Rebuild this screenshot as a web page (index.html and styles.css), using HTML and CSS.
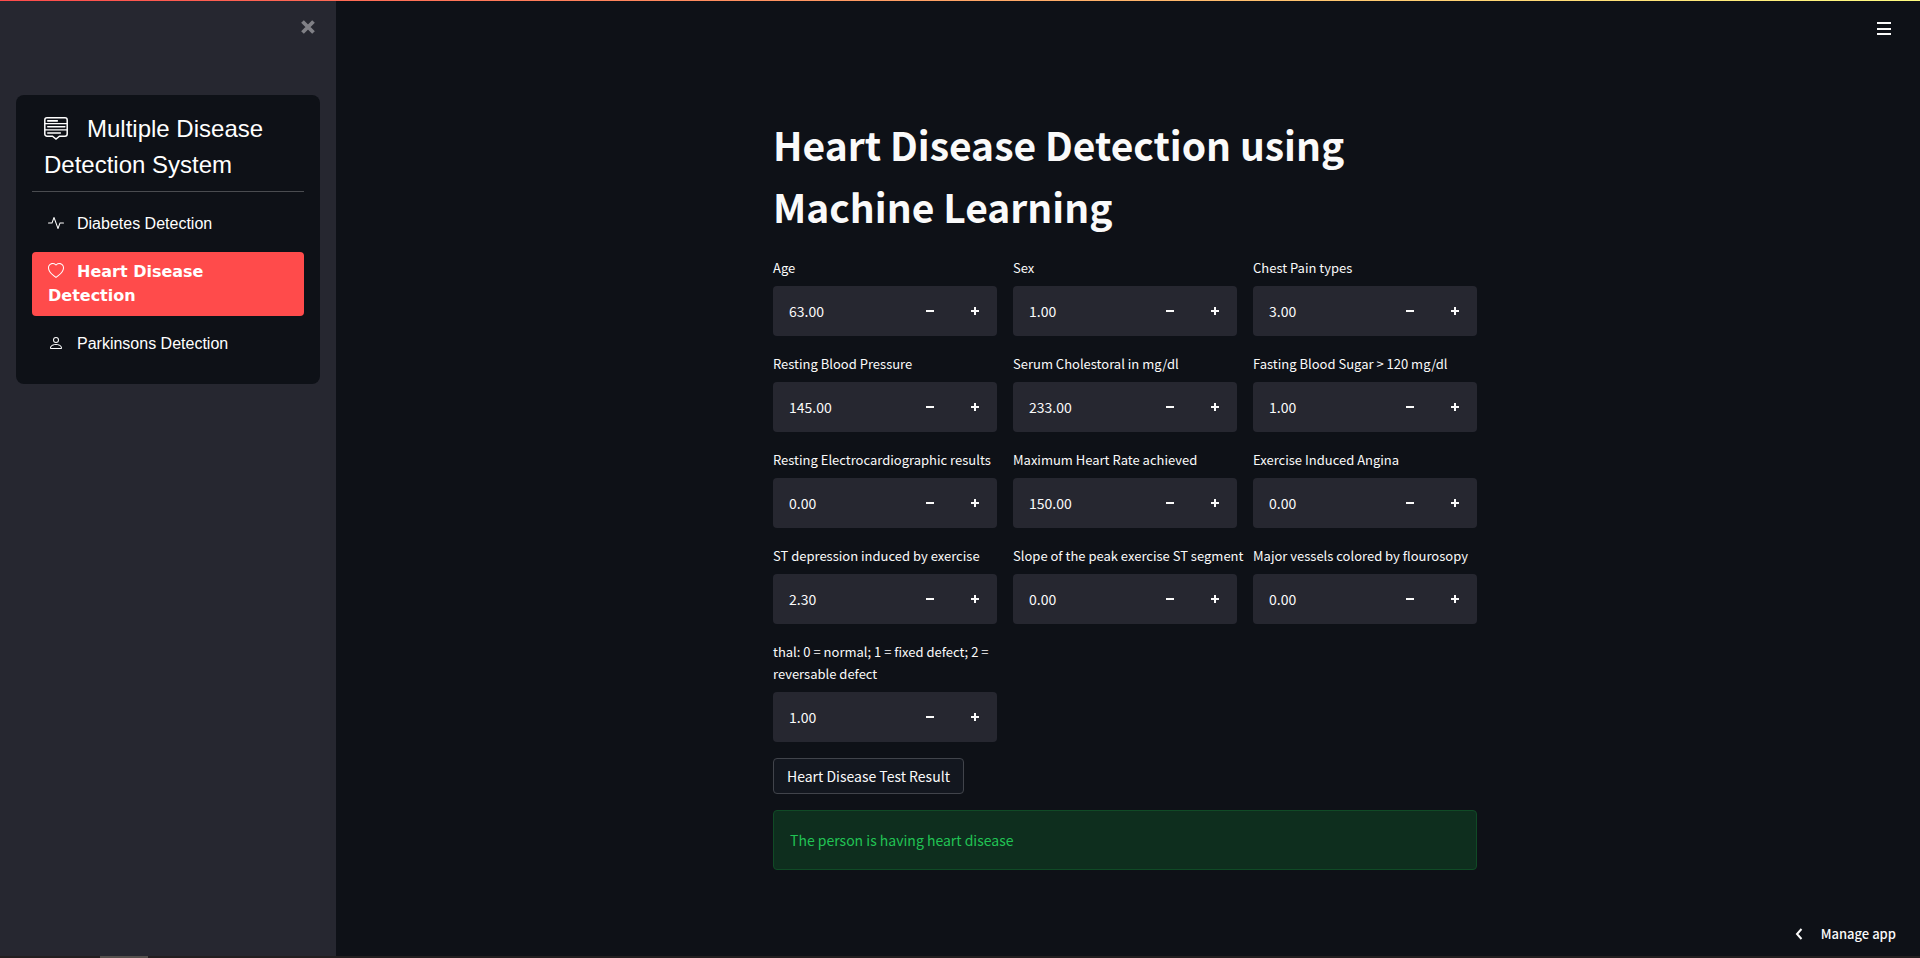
FILE: index.html
```html
<!DOCTYPE html>
<html lang="en">
<head>
<meta charset="utf-8">
<title>Multiple Disease Detection System</title>
<link rel="stylesheet" href="styles.css">
</head>
<body>
<div class="app">
  <div class="decoration"></div>
  <aside class="sidebar">
    <div class="sidebar-top">
      <button class="close" type="button" aria-label="Close sidebar">
        <svg viewBox="0 0 14 14" width="14" height="14" fill="none" stroke="currentColor" stroke-width="3.800"><path d="M1.500 1.500l11 11M12.500 1.500l-11 11"/></svg>
      </button>
    </div>
    <nav class="menu">
      <h2 class="menu-title"><svg class="title-icon" viewBox="0 0 24 24" width="24" height="24" fill="none" stroke="currentColor"><path stroke-width="1.500" d="M3 .8h18a2.200 2.200 0 0 1 2.200 2.200v14a2.200 2.200 0 0 1-2.200 2.200h-5.500L12 22l-3.500-2.800H3A2.200 2.200 0 0 1 .8 17V3A2.200 2.200 0 0 1 3 .8z"/><path stroke-width="1.200" d="M1 6.600h22M1 12.900h22"/><path stroke-width="1.600" stroke-linecap="round" d="M3.800 3.900h9.500M3.800 9.800h17M3.800 16h12.500"/></svg>Multiple Disease Detection System</h2>
      <hr class="rule">
      <ul class="items">
        <li><a class="item" href="#diabetes"><svg class="icon" viewBox="0 0 16 16" width="16" height="16" fill="currentColor"><path fill-rule="evenodd" d="M6 2a.5.5 0 0 1 .47.33L10 12.040l1.530-4.210A.5.5 0 0 1 12 7.500h3.500a.5.5 0 0 1 0 1h-3.150l-1.880 5.170a.5.5 0 0 1-.94 0L6 3.960 4.470 8.170A.5.5 0 0 1 4 8.500H.5a.5.5 0 0 1 0-1h3.150l1.880-5.170A.5.5 0 0 1 6 2"/></svg>Diabetes Detection</a></li>
        <li><a class="item active" href="#heart" aria-current="page"><svg class="icon" viewBox="0 0 16 16" width="16" height="16" fill="currentColor"><path d="m8 2.748-.717-.737C5.600.281 2.514.878 1.400 3.053c-.523 1.023-.641 2.500.314 4.385.92 1.815 2.834 3.989 6.286 6.357 3.452-2.368 5.365-4.542 6.286-6.357.955-1.886.838-3.362.314-4.385C13.486.878 10.400.28 8.717 2.010zM8 15C-7.333 4.868 3.279-3.040 7.824 1.143q.09.083.176.171a3 3 0 0 1 .176-.17C12.720-3.042 23.333 4.867 8 15"/></svg>Heart Disease Detection</a></li>
        <li><a class="item" href="#parkinsons"><svg class="icon" viewBox="0 0 16 16" width="16" height="16" fill="currentColor"><path d="M8 8a3 3 0 1 0 0-6 3 3 0 0 0 0 6m2-3a2 2 0 1 1-4 0 2 2 0 0 1 4 0m4 8c0 1-1 1-1 1H3s-1 0-1-1 1-4 6-4 6 3 6 4m-1-.004c-.001-.246-.154-.986-.832-1.664C11.516 10.680 10.289 10 8 10s-3.516.68-4.168 1.332c-.678.678-.83 1.418-.832 1.664z"/></svg>Parkinsons Detection</a></li>
      </ul>
    </nav>
  </aside>
  <main class="main">
    <header class="toolbar">
      <button class="hamburger" type="button" aria-label="Main menu">
        <svg viewBox="0 0 14 13" width="14" height="13" fill="currentColor"><path d="M0 0h14v2H0zM0 6h14v2H0zM0 11h14v2H0z"/></svg>
      </button>
    </header>
    <form class="content">
      <h1 class="title">Heart Disease Detection using Machine Learning</h1>
      <div class="fields" id="fields"></div>
      <button class="submit" type="button">Heart Disease Test Result</button>
      <div class="alert" role="status">The person is having heart disease</div>
    </form>
    <button class="manage" type="button">
      <svg viewBox="0 0 8 12" width="8" height="12" fill="none" stroke="currentColor" stroke-width="2"><path d="M6.500 1 2 6l4.500 5"/></svg>
      Manage app
    </button>
  </main>
  <div class="edge"><span class="edge-thumb"></span></div>
</div>
<script src="fields.js"></script>
</body>
</html>
```
FILE: styles.css
```css
* { box-sizing: border-box; }

body {
  margin: 0;
  background: #0e1117;
  color: #fafafa;
  font-family: "Source Sans Pro", "Noto Sans CJK SC", sans-serif;
  font-size: 14px;
}

button {
  border: 0;
  padding: 0;
  background: none;
  color: inherit;
  font: inherit;
  cursor: pointer;
}

svg { display: block; }

.app {
  display: grid;
  grid-template-columns: 336px 1fr;
  grid-template-rows: 1px 1fr 2px;
  min-height: 100vh;
}

.decoration {
  grid-column: 1 / -1;
  background: linear-gradient(90deg, #ff4b4b, #fffd80);
}

.sidebar {
  padding: 0 16px;
  background: #262730;
}

.sidebar-top {
  display: flex;
  justify-content: flex-end;
  height: 94px;
  padding: 19px 5px 0 0;
}

.close {
  align-self: flex-start;
  color: #808086;
}

.menu {
  padding: 16px;
  border-radius: 8px;
  background: #0e1117;
  color: #fff;
  font-family: "Liberation Sans", Arial, sans-serif;
}

.menu-title {
  margin: 0;
  padding: 0 12px;
  font-size: 24px;
  font-weight: 400;
  line-height: 36px;
}

.title-icon {
  display: inline-block;
  margin-right: 19px;
  vertical-align: -4px;
}

.rule {
  margin: 8px 0 12px;
  border: 0;
  border-top: 1px solid #4a4c50;
}

.items {
  display: grid;
  gap: 8px;
  margin: 0;
  padding: 0 0 4px;
  list-style: none;
}

.item {
  display: block;
  padding: 8px 16px;
  border-radius: 4px;
  color: #fff;
  font-size: 16px;
  line-height: 24px;
  text-decoration: none;
}

.icon {
  display: inline-block;
  margin-right: 13px;
  vertical-align: -2px;
}

.active {
  background: #ff4b4b;
  font-family: "Arial Black", "DejaVu Sans", sans-serif;
  font-weight: 900;
}

.main {
  display: flex;
  flex-direction: column;
  padding-right: 6px;
}

.toolbar {
  display: flex;
  justify-content: flex-end;
  padding: 21px 23px 0 0;
}

.content {
  width: 100%;
  max-width: 736px;
  margin: 0 auto;
  padding: 78px 16px 16px;
}

.title {
  margin: 0 0 20px;
  font-size: 39px;
  font-weight: 700;
  line-height: 62px;
}

.fields {
  display: grid;
  grid-template-columns: repeat(3, 1fr);
  gap: 17px 16px;
}

.field { min-width: 0; }

/* Long labels may run into the column gap before they wrap. */
.label {
  display: block;
  margin: 0 -12px 7px 0;
  font-size: 13px;
  line-height: 22px;
}

.stepper {
  display: flex;
  height: 50px;
  border-radius: 4px;
  background: #262730;
}

.value {
  flex: 1;
  min-width: 0;
  padding: 0 16px;
  border: 0;
  background: none;
  color: inherit;
  font: inherit;
}

.step {
  display: grid;
  place-items: center;
  width: 45px;
}

.submit {
  display: block;
  height: 36px;
  margin: 16px 0;
  padding: 0 13px;
  border: 1px solid #41444b;
  border-radius: 4px;
  background: #13171f;
}

.alert {
  padding: 16px;
  border: 1px solid #104a26;
  border-radius: 4px;
  background: #0e2e1e;
  color: #21c354;
  line-height: 26px;
}

.manage {
  display: flex;
  align-items: center;
  gap: 18px;
  margin: auto 18px 11px auto;
  font-size: 13px;
  font-weight: 500;
  line-height: 22px;
}

.edge {
  grid-column: 1 / -1;
  padding-left: 100px;
  background: #231f20;
}

.edge-thumb {
  display: block;
  width: 48px;
  height: 2px;
  background: #55504d;
}
```
FILE: fields.js
```js
const fields = [
  ["Age", "63.00"],
  ["Sex", "1.00"],
  ["Chest Pain types", "3.00"],
  ["Resting Blood Pressure", "145.00"],
  ["Serum Cholestoral in mg/dl", "233.00"],
  ["Fasting Blood Sugar > 120 mg/dl", "1.00"],
  ["Resting Electrocardiographic results", "0.00"],
  ["Maximum Heart Rate achieved", "150.00"],
  ["Exercise Induced Angina", "0.00"],
  ["ST depression induced by exercise", "2.30"],
  ["Slope of the peak exercise ST segment", "0.00"],
  ["Major vessels colored by flourosopy", "0.00"],
  ["thal: 0 = normal; 1 = fixed defect; 2 = reversable defect", "1.00"]
];

const minus = '<svg viewBox="0 0 8 8" width="8" height="8"><path d="M0 3h8v2H0z" fill="currentColor"/></svg>';
const plus = '<svg viewBox="0 0 8 8" width="8" height="8"><path d="M3 0h2v3h3v2H5v3H3V5H0V3h3z" fill="currentColor"/></svg>';

document.getElementById("fields").innerHTML = fields.map(([label, value], i) => `
  <div class="field">
    <label class="label" for="f${i}">${label.replace(">", "&gt;")}</label>
    <div class="stepper">
      <input class="value" id="f${i}" type="text" inputmode="decimal" value="${value}">
      <button class="step" type="button" aria-label="Decrease">${minus}</button>
      <button class="step" type="button" aria-label="Increase">${plus}</button>
    </div>
  </div>`).join("");
```
